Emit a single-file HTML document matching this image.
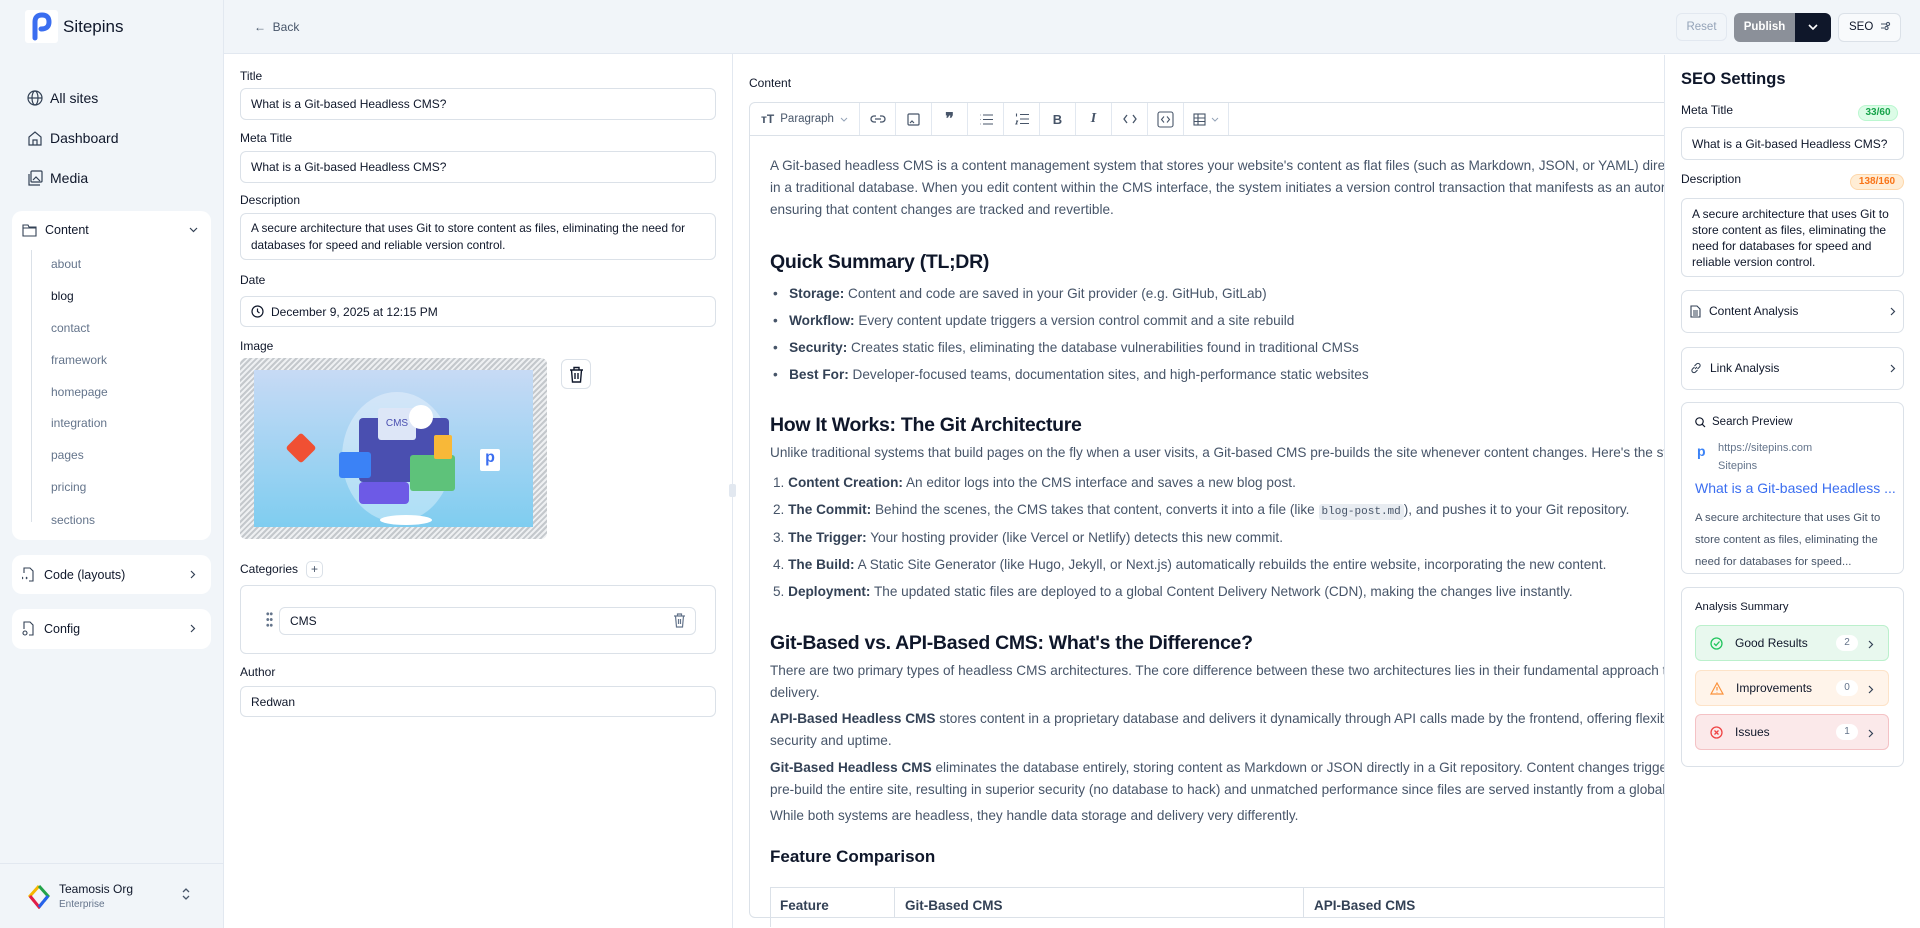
<!DOCTYPE html>
<html><head><meta charset="utf-8"><style>
*{box-sizing:border-box;margin:0;padding:0}
body{width:1920px;height:928px;overflow:hidden;font-family:"Liberation Sans",Arial,sans-serif;background:#fff;position:relative;color:#0f172a}
.a{position:absolute}
.side{left:0;top:0;width:224px;height:928px;background:#f1f5f9;border-right:1px solid #e2e8f0}
.hdr{left:224px;top:0;width:1696px;height:54px;background:#f1f5f9;border-bottom:1px solid #e2e8f0}
.nav{left:27px;font-size:14px;color:#0f172a;display:flex;align-items:center;gap:7px}
.card{background:#fff;border-radius:10px}
.sub{left:51px;font-size:12px;color:#64748b}
.lbl{font-size:12px;color:#0f172a}
.inp{border:1px solid #dbe1e8;border-radius:6px;background:#fff;font-size:12px;color:#0f172a;padding:0 10px;display:flex;align-items:center}
.ct{font-size:13.6px;color:#475569;line-height:22px}
.ct b{color:#334155}
.h2{font-size:19.5px;font-weight:bold;color:#0f172a;letter-spacing:-.3px}
.tb{top:103px;height:32px;border-right:1px solid #e2e8f0;display:flex;align-items:center;justify-content:center;color:#475569}
.sc{border:1px solid #dbe1e8;border-radius:7px;background:#fff}
.row{left:1695px;width:194px;height:36px;border-radius:6px;display:flex;align-items:center;font-size:12px;color:#0f172a;padding-left:14px}
.cnt{position:absolute;right:30px;background:#fff;border-radius:9px;width:22px;height:16px;font-size:10px;color:#64748b;text-align:center;line-height:16px}
</style></head><body>
<div class="a side"></div>
<div class="a hdr"></div>
<div class="a" style="left:25px;top:10px;width:33px;height:33px;background:#fff;border-radius:3px">
<svg width="33" height="33" viewBox="0 0 33 33"><path d="M10 28 L10 12 Q10 5 17 5 Q24 5 24 12 Q24 19 16 19" fill="none" stroke="#3b6ef0" stroke-width="5" stroke-linecap="round"/></svg></div>
<div class="a" style="left:63px;top:17px;font-size:17px;color:#0f172a">Sitepins</div>
<div class="a nav" style="top:90px"><svg width="16" height="16" viewBox="0 0 16 16" fill="none" stroke="#334155" stroke-width="1.2"><circle cx="8" cy="8" r="7"/><ellipse cx="8" cy="8" rx="3" ry="7"/><path d="M1 8h14"/></svg>All sites</div>
<div class="a nav" style="top:130px"><svg width="16" height="16" viewBox="0 0 16 16" fill="none" stroke="#334155" stroke-width="1.2"><path d="M2 15V7l6-5 6 5v8zM6 15v-5h4v5"/></svg>Dashboard</div>
<div class="a nav" style="top:170px"><svg width="16" height="16" viewBox="0 0 16 16" fill="none" stroke="#334155" stroke-width="1.2"><rect x="4" y="1" width="11" height="11" rx="1"/><path d="M2 4v11h11M6 10l3-3 4 4"/></svg>Media</div>
<div class="a card" style="left:12px;top:211px;width:199px;height:329px"></div>
<div class="a" style="left:22px;top:223px;font-size:12.5px;display:flex;gap:8px;align-items:center"><svg width="15" height="14" viewBox="0 0 15 14" fill="none" stroke="#334155" stroke-width="1.1"><path d="M1 2h5l1 2h7v9H1zM1 5h13"/></svg>Content</div>
<svg class="a" style="left:189px;top:227px" width="9" height="6" viewBox="0 0 9 6" fill="none" stroke="#334155" stroke-width="1.2"><path d="M1 1l3.5 3.5L8 1"/></svg>
<div class="a" style="left:31px;top:250px;width:1px;height:272px;background:#dbe1e8"></div>
<div class="a sub" style="top:257px">about</div>
<div class="a sub" style="top:289px;color:#0f172a">blog</div>
<div class="a sub" style="top:321px">contact</div>
<div class="a sub" style="top:353px">framework</div>
<div class="a sub" style="top:385px">homepage</div>
<div class="a sub" style="top:416px">integration</div>
<div class="a sub" style="top:448px">pages</div>
<div class="a sub" style="top:480px">pricing</div>
<div class="a sub" style="top:513px">sections</div>
<div class="a card" style="left:12px;top:555px;width:199px;height:39px"></div>
<div class="a" style="left:22px;top:567px;font-size:12.5px;display:flex;gap:9px;align-items:center"><svg width="13" height="15" viewBox="0 0 13 15" fill="none" stroke="#334155" stroke-width="1.1"><path d="M2 6V1h6l3 3v10H7M1 10l-1 1 1 1M4 10l1 1-1 1"/></svg>Code (layouts)</div>
<svg class="a" style="left:190px;top:570px" width="6" height="9" viewBox="0 0 6 9" fill="none" stroke="#334155" stroke-width="1.2"><path d="M1 1l3.5 3.5L1 8"/></svg>
<div class="a card" style="left:12px;top:609px;width:199px;height:40px"></div>
<div class="a" style="left:22px;top:621px;font-size:12.5px;display:flex;gap:9px;align-items:center"><svg width="13" height="15" viewBox="0 0 13 15" fill="none" stroke="#334155" stroke-width="1.1"><path d="M2 8V1h6l3 3v10H7"/><circle cx="3" cy="12" r="2"/></svg>Config</div>
<svg class="a" style="left:190px;top:624px" width="6" height="9" viewBox="0 0 6 9" fill="none" stroke="#334155" stroke-width="1.2"><path d="M1 1l3.5 3.5L1 8"/></svg>
<div class="a" style="left:0;top:863px;width:223px;height:1px;background:#e2e8f0"></div>
<svg class="a" style="left:27px;top:884px" width="24" height="25" viewBox="0 0 24 25" fill="none" stroke-width="3"><path d="M12 2L3 12l4 5" stroke="#f5b700"/><path d="M12 2l9 10-4 5" stroke="#22a34a"/><path d="M3 12l9 11 4-5" stroke="#e11d48"/><path d="M21 12l-9 11" stroke="#2563eb"/></svg>
<div class="a" style="left:59px;top:882px;font-size:12px;color:#0f172a">Teamosis Org</div>
<div class="a" style="left:59px;top:899px;font-size:10px;color:#64748b">Enterprise</div>
<svg class="a" style="left:181px;top:886px" width="10" height="16" viewBox="0 0 10 16" fill="none" stroke="#475569" stroke-width="1.3"><path d="M2 6l3-3 3 3M2 10l3 3 3-3"/></svg>

<div class="a" style="left:254px;top:20px;font-size:12px;color:#475569">&#8592;&nbsp; Back</div>
<div class="a" style="left:1676px;top:13px;width:51px;height:28px;border:1px solid #e2e8f0;border-radius:6px;font-size:11.5px;color:#94a3b8;text-align:center;line-height:26px">Reset</div>
<div class="a" style="left:1734px;top:13px;width:61px;height:29px;background:#8b9099;border-radius:6px 0 0 6px;font-size:11.5px;color:#fff;font-weight:bold;text-align:center;line-height:29px">Publish</div>
<div class="a" style="left:1795px;top:13px;width:36px;height:29px;background:#0f172a;border-radius:0 6px 6px 0"><svg style="margin:10px 0 0 13px" width="10" height="8" viewBox="0 0 10 8" fill="none" stroke="#fff" stroke-width="1.6"><path d="M1 2l4 4 4-4"/></svg></div>
<div class="a" style="left:1838px;top:13px;width:63px;height:29px;border:1px solid #dbe1e8;border-radius:6px;font-size:11.5px;color:#0f172a;line-height:27px;padding-left:10px;background:#f8fafc">SEO <svg style="margin-left:4px;vertical-align:-1px" width="12" height="10" viewBox="0 0 12 10" fill="none" stroke="#475569" stroke-width="1.1"><path d="M1 3h5M1 7h3"/><circle cx="8" cy="3" r="1.6"/><circle cx="6.5" cy="7" r="1.6"/></svg></div>

<div class="a lbl" style="left:240px;top:69px">Title</div>
<div class="a inp" style="left:240px;top:88px;width:476px;height:32px">What is a Git-based Headless CMS?</div>
<div class="a lbl" style="left:240px;top:131px">Meta Title</div>
<div class="a inp" style="left:240px;top:151px;width:476px;height:32px">What is a Git-based Headless CMS?</div>
<div class="a lbl" style="left:240px;top:193px">Description</div>
<div class="a inp" style="left:240px;top:213px;width:476px;height:47px;line-height:17px;font-size:11.8px">A secure architecture that uses Git to store content as files, eliminating the need for databases for speed and reliable version control.</div>
<div class="a lbl" style="left:240px;top:273px">Date</div>
<div class="a inp" style="left:240px;top:296px;width:476px;height:31px;gap:7px"><svg width="13" height="13" viewBox="0 0 13 13" fill="none" stroke="#0f172a" stroke-width="1.2"><circle cx="6.5" cy="6.5" r="5.5"/><path d="M6.5 3.5v3l2 1.5"/></svg>December 9, 2025 at 12:15 PM</div>
<div class="a lbl" style="left:240px;top:339px">Image</div>
<div class="a" style="left:240px;top:358px;width:307px;height:181px;border-radius:6px;background:repeating-linear-gradient(-45deg,#c4c8cc 0 2px,#eef0f2 2px 4px)"></div>
<div class="a" style="left:254px;top:370px;width:279px;height:157px;background:linear-gradient(180deg,#c7daf5,#7fcdf0)">
 <div class="a" style="left:88px;top:22px;width:110px;height:130px;border-radius:50%;background:rgba(255,255,255,.35)"></div>
 <div class="a" style="left:36px;top:67px;width:22px;height:22px;background:#f05033;transform:rotate(45deg);border-radius:3px"></div>
 <div class="a" style="left:105px;top:48px;width:90px;height:64px;background:#4a4fb0;border-radius:4px"></div>
 <div class="a" style="left:105px;top:112px;width:50px;height:22px;background:#6d5ae6;border-radius:4px"></div>
 <div class="a" style="left:85px;top:82px;width:32px;height:26px;background:#3b82f6;border-radius:3px"></div>
 <div class="a" style="left:124px;top:38px;width:38px;height:32px;background:#dde6f7;border-radius:3px;font-size:10px;color:#4a4fb0;text-align:center;line-height:32px">CMS</div>
 <div class="a" style="left:155px;top:35px;width:24px;height:24px;background:#fff;border-radius:50%"></div>
 <div class="a" style="left:156px;top:85px;width:45px;height:36px;background:#5ec27a;border-radius:3px"></div>
 <div class="a" style="left:180px;top:65px;width:18px;height:24px;background:#f8b838;border-radius:2px"></div>
 <div class="a" style="left:126px;top:145px;width:52px;height:10px;background:#fff;border-radius:50%"></div>
 <div class="a" style="left:226px;top:79px;width:20px;height:22px;background:#fff;border-radius:2px;color:#3b6ef0;font-weight:bold;font-size:16px;text-align:center">p</div>
</div>
<div class="a" style="left:561px;top:359px;width:30px;height:30px;border:1px solid #dbe1e8;border-radius:6px;background:#fff"><svg style="margin:6px 0 0 7px" width="15" height="17" viewBox="0 0 15 17" fill="none" stroke="#0f172a" stroke-width="1.4"><path d="M1 4h13M5 4V1.5h5V4M2.5 4l1 12h8l1-12M6 7v6M9 7v6"/></svg></div>
<div class="a lbl" style="left:240px;top:562px">Categories</div>
<div class="a" style="left:306px;top:561px;width:17px;height:17px;border:1px solid #dbe1e8;border-radius:5px;font-size:12px;color:#475569;text-align:center;line-height:15px">+</div>
<div class="a" style="left:240px;top:585px;width:476px;height:69px;border:1px solid #dbe1e8;border-radius:6px"></div>
<div class="a" style="left:266px;top:611px;width:7px;height:17px;background:radial-gradient(circle,#64748b 1.3px,transparent 1.6px) 0 0/3.5px 5.7px"></div>
<div class="a inp" style="left:279px;top:607px;width:417px;height:28px">CMS</div>
<svg class="a" style="left:673px;top:613px" width="13" height="15" viewBox="0 0 13 15" fill="none" stroke="#64748b" stroke-width="1.2"><path d="M1 3h11M4.5 3V1h4v2M2.5 3l1 11h6l1-11M5.5 6v5M7.5 6v5"/></svg>
<div class="a lbl" style="left:240px;top:665px">Author</div>
<div class="a inp" style="left:240px;top:686px;width:476px;height:31px">Redwan</div>
<div class="a" style="left:732px;top:54px;width:1px;height:874px;background:#e2e8f0"></div>
<div class="a" style="left:729px;top:484px;width:7px;height:13px;background:#e2e8f0;border-radius:2px"></div>

<div class="a lbl" style="left:749px;top:76px">Content</div>
<div class="a" style="left:749px;top:102px;width:1000px;height:816px;border:1px solid #dbe1e8;border-radius:6px"></div>
<div class="a" style="left:750px;top:135px;width:920px;height:1px;background:#dbe1e8"></div>
<div class="a tb" style="left:750px;width:110px;font-size:11.5px;gap:6px"><b style="font-size:12px">ᴛT</b>Paragraph <svg width="8" height="5" viewBox="0 0 8 5" fill="none" stroke="#94a3b8" stroke-width="1"><path d="M1 1l3 3 3-3"/></svg></div>
<div class="a tb" style="left:860px;width:36px"><svg width="16" height="10" viewBox="0 0 16 10" fill="none" stroke="#475569" stroke-width="1.3"><path d="M6 2H4a3 3 0 000 6h2M10 2h2a3 3 0 010 6h-2M5 5h6"/></svg></div>
<div class="a tb" style="left:896px;width:36px"><svg width="13" height="13" viewBox="0 0 13 13" fill="none" stroke="#475569" stroke-width="1.2"><rect x="1" y="1" width="11" height="11" rx="1"/><path d="M3 10l2-2 2 2"/></svg></div>
<div class="a tb" style="left:932px;width:36px;font-weight:bold;font-size:16px">❞</div>
<div class="a tb" style="left:968px;width:36px"><svg width="14" height="11" viewBox="0 0 14 11" fill="none" stroke="#475569" stroke-width="1.1"><path d="M4 1h10M4 5.5h10M4 10h10M1 1h.5M1 5.5h.5M1 10h.5"/></svg></div>
<div class="a tb" style="left:1004px;width:36px"><svg width="14" height="12" viewBox="0 0 14 12" fill="none" stroke="#475569" stroke-width="1.1"><path d="M5 1.5h9M5 6h9M5 10.5h9M1.5 0.5v3M1 8h1.5l-1.5 3h1.5"/></svg></div>
<div class="a tb" style="left:1040px;width:36px;font-weight:bold;font-size:13px">B</div>
<div class="a tb" style="left:1076px;width:36px;font-style:italic;font-weight:bold;font-family:'Liberation Serif',serif;font-size:14px">I</div>
<div class="a tb" style="left:1112px;width:36px"><svg width="14" height="10" viewBox="0 0 14 10" fill="none" stroke="#475569" stroke-width="1.3"><path d="M4 1L1 5l3 4M10 1l3 4-3 4"/></svg></div>
<div class="a tb" style="left:1148px;width:36px"><svg width="17" height="17" viewBox="0 0 17 17" fill="none" stroke="#475569" stroke-width="1.1"><rect x="1" y="1" width="15" height="15" rx="2"/><path d="M7 5.5L4.5 8.5 7 11.5M10 5.5l2.5 3-2.5 3"/></svg></div>
<div class="a tb" style="left:1184px;width:45px;gap:5px"><svg width="13" height="13" viewBox="0 0 13 13" fill="none" stroke="#475569" stroke-width="1.1"><rect x="1" y="1" width="11" height="11"/><path d="M1 5h11M1 8.5h11M5 1v11"/></svg><svg width="8" height="5" viewBox="0 0 8 5" fill="none" stroke="#94a3b8" stroke-width="1"><path d="M1 1l3 3 3-3"/></svg></div>

<div class="a ct" style="left:770px;top:155px;width:900px;white-space:nowrap">A Git-based headless CMS is a content management system that stores your website's content as flat files (such as Markdown, JSON, or YAML) directly<br>in a traditional database. When you edit content within the CMS interface, the system initiates a version control transaction that manifests as an automatic<br>ensuring that content changes are tracked and revertible.</div>
<div class="a h2" style="left:770px;top:251px">Quick Summary (TL;DR)</div>
<div class="a ct" style="left:773px;top:280px;white-space:nowrap;line-height:27px">
<div>•&nbsp;&nbsp; <b>Storage:</b> Content and code are saved in your Git provider (e.g. GitHub, GitLab)</div>
<div>•&nbsp;&nbsp; <b>Workflow:</b> Every content update triggers a version control commit and a site rebuild</div>
<div>•&nbsp;&nbsp; <b>Security:</b> Creates static files, eliminating the database vulnerabilities found in traditional CMSs</div>
<div>•&nbsp;&nbsp; <b>Best For:</b> Developer-focused teams, documentation sites, and high-performance static websites</div></div>
<div class="a h2" style="left:770px;top:414px">How It Works: The Git Architecture</div>
<div class="a ct" style="left:770px;top:442px;white-space:nowrap">Unlike traditional systems that build pages on the fly when a user visits, a Git-based CMS pre-builds the site whenever content changes. Here's the step</div>
<div class="a ct" style="left:773px;top:469px;white-space:nowrap;line-height:27.3px">
<div style="height:27.3px">1. <b>Content Creation:</b> An editor logs into the CMS interface and saves a new blog post.</div>
<div style="height:27.3px">2. <b>The Commit:</b> Behind the scenes, the CMS takes that content, converts it into a file (like <span style="font-family:'Liberation Mono',monospace;font-size:11px;background:#e8ecf1;padding:2px 3px;border-radius:3px;line-height:1">blog-post.md</span>), and pushes it to your Git repository.</div>
<div style="height:27.3px">3. <b>The Trigger:</b> Your hosting provider (like Vercel or Netlify) detects this new commit.</div>
<div style="height:27.3px">4. <b>The Build:</b> A Static Site Generator (like Hugo, Jekyll, or Next.js) automatically rebuilds the entire website, incorporating the new content.</div>
<div style="height:27.3px">5. <b>Deployment:</b> The updated static files are deployed to a global Content Delivery Network (CDN), making the changes live instantly.</div></div>
<div class="a h2" style="left:770px;top:632px">Git-Based vs. API-Based CMS: What's the Difference?</div>
<div class="a ct" style="left:770px;top:660px;white-space:nowrap">There are two primary types of headless CMS architectures. The core difference between these two architectures lies in their fundamental approach to<br>delivery.</div>
<div class="a ct" style="left:770px;top:708px;white-space:nowrap"><b>API-Based Headless CMS</b> stores content in a proprietary database and delivers it dynamically through API calls made by the frontend, offering flexibility<br>security and uptime.</div>
<div class="a ct" style="left:770px;top:757px;white-space:nowrap"><b>Git-Based Headless CMS</b> eliminates the database entirely, storing content as Markdown or JSON directly in a Git repository. Content changes trigger<br>pre-build the entire site, resulting in superior security (no database to hack) and unmatched performance since files are served instantly from a global</div>
<div class="a ct" style="left:770px;top:805px;white-space:nowrap">While both systems are headless, they handle data storage and delivery very differently.</div>
<div class="a" style="left:770px;top:847px;font-size:17px;font-weight:bold;color:#0f172a">Feature Comparison</div>
<div class="a" style="left:770px;top:887px;width:900px;height:40px;border:1px solid #dbe1e8;border-bottom:none"></div>
<div class="a" style="left:894px;top:887px;width:1px;height:31px;background:#dbe1e8"></div>
<div class="a" style="left:1303px;top:887px;width:1px;height:31px;background:#dbe1e8"></div>
<div class="a" style="left:780px;top:898px;font-size:13.5px;font-weight:bold;color:#334155">Feature</div>
<div class="a" style="left:905px;top:898px;font-size:13.5px;font-weight:bold;color:#334155">Git-Based CMS</div>
<div class="a" style="left:1314px;top:898px;font-size:13.5px;font-weight:bold;color:#334155">API-Based CMS</div>

<div class="a" style="left:1664px;top:55px;width:256px;height:873px;background:#fff;border-left:1px solid #e2e8f0"></div>
<div class="a" style="left:1681px;top:70px;font-size:16.5px;font-weight:bold;color:#0f172a">SEO Settings</div>
<div class="a" style="left:1681px;top:103px;font-size:12px;color:#0f172a">Meta Title</div>
<div class="a" style="left:1858px;top:105px;width:40px;height:16px;background:#dcfce7;border:1px solid #bbf7d0;border-radius:8px;font-size:10px;color:#16a34a;text-align:center;line-height:14px;font-weight:bold">33/60</div>
<div class="a inp" style="left:1681px;top:127px;width:223px;height:33px;font-size:12px">What is a Git-based Headless CMS?</div>
<div class="a" style="left:1681px;top:172px;font-size:12px;color:#0f172a">Description</div>
<div class="a" style="left:1850px;top:174px;width:54px;height:16px;background:#ffedd5;border:1px solid #fed7aa;border-radius:8px;font-size:10px;color:#f97316;text-align:center;line-height:14px;font-weight:bold">138/160</div>
<div class="a inp" style="left:1681px;top:198px;width:223px;height:79px;font-size:12px;line-height:16px;align-items:flex-start;padding-top:7px">A secure architecture that uses Git to store content as files, eliminating the need for databases for speed and reliable version control.</div>
<div class="a sc" style="left:1681px;top:290px;width:223px;height:43px"></div>
<div class="a" style="left:1690px;top:304px;font-size:12px;display:flex;gap:8px;align-items:center"><svg width="11" height="13" viewBox="0 0 11 13" fill="none" stroke="#334155" stroke-width="1.1"><path d="M1 1h6l3 3v8H1zM3 6h5M3 8h5M3 10h5"/></svg>Content Analysis</div>
<svg class="a" style="left:1890px;top:307px" width="6" height="9" viewBox="0 0 6 9" fill="none" stroke="#334155" stroke-width="1.2"><path d="M1 1l3.5 3.5L1 8"/></svg>
<div class="a sc" style="left:1681px;top:347px;width:223px;height:43px"></div>
<div class="a" style="left:1690px;top:361px;font-size:12px;display:flex;gap:8px;align-items:center"><svg width="12" height="12" viewBox="0 0 12 12" fill="none" stroke="#334155" stroke-width="1.1"><path d="M5 7l2-2M4.5 5L2.5 7a2 2 0 003 3l2-2M7.5 7l2-2a2 2 0 00-3-3l-2 2"/></svg>Link Analysis</div>
<svg class="a" style="left:1890px;top:364px" width="6" height="9" viewBox="0 0 6 9" fill="none" stroke="#334155" stroke-width="1.2"><path d="M1 1l3.5 3.5L1 8"/></svg>
<div class="a sc" style="left:1681px;top:402px;width:223px;height:172px"></div>
<div class="a" style="left:1695px;top:416px;font-size:11.5px;display:flex;gap:6px;align-items:center"><svg width="11" height="11" viewBox="0 0 11 11" fill="none" stroke="#0f172a" stroke-width="1.2"><circle cx="4.5" cy="4.5" r="3.7"/><path d="M7.3 7.3L10 10"/></svg>Search Preview</div>
<div class="a" style="left:1697px;top:443px;font-size:14px;font-weight:bold;color:#3b82f6">p</div>
<div class="a" style="left:1718px;top:442px;font-size:11px;color:#64748b">https://sitepins.com</div>
<div class="a" style="left:1718px;top:460px;font-size:11px;color:#64748b">Sitepins</div>
<div class="a" style="left:1695px;top:480px;font-size:14px;color:#3b6ef0">What is a Git-based Headless ...</div>
<div class="a" style="left:1695px;top:507px;width:200px;font-size:11.3px;line-height:22px;color:#475569">A secure architecture that uses Git to store content as files, eliminating the need for databases for speed...</div>
<div class="a sc" style="left:1681px;top:587px;width:223px;height:180px"></div>
<div class="a" style="left:1695px;top:601px;font-size:11.3px;color:#0f172a">Analysis Summary</div>
<div class="a row" style="top:625px;background:#e8f8ee;border:1px solid #bbf0cc"><svg style="margin-right:12px" width="13" height="13" viewBox="0 0 13 13" fill="none" stroke="#22c55e" stroke-width="1.3"><circle cx="6.5" cy="6.5" r="5.5"/><path d="M4 6.5l2 2 3.5-4"/></svg>Good Results<span class="cnt">2</span><svg class="a" style="right:14px;top:14px" width="6" height="9" viewBox="0 0 6 9" fill="none" stroke="#334155" stroke-width="1.2"><path d="M1 1l3.5 3.5L1 8"/></svg></div>
<div class="a row" style="top:670px;background:#fff4ea;border:1px solid #fde3c8"><svg style="margin-right:12px" width="14" height="13" viewBox="0 0 14 13" fill="none" stroke="#fb923c" stroke-width="1.2"><path d="M7 1l6 11H1zM7 5v3.5M7 10v.5"/></svg>Improvements<span class="cnt">0</span><svg class="a" style="right:14px;top:14px" width="6" height="9" viewBox="0 0 6 9" fill="none" stroke="#334155" stroke-width="1.2"><path d="M1 1l3.5 3.5L1 8"/></svg></div>
<div class="a row" style="top:714px;background:#fbe9ea;border:1px solid #f4c2c5"><svg style="margin-right:12px" width="13" height="13" viewBox="0 0 13 13" fill="none" stroke="#ef4444" stroke-width="1.3"><circle cx="6.5" cy="6.5" r="5.5"/><path d="M4.5 4.5l4 4M8.5 4.5l-4 4"/></svg>Issues<span class="cnt">1</span><svg class="a" style="right:14px;top:14px" width="6" height="9" viewBox="0 0 6 9" fill="none" stroke="#334155" stroke-width="1.2"><path d="M1 1l3.5 3.5L1 8"/></svg></div>
</body></html>
